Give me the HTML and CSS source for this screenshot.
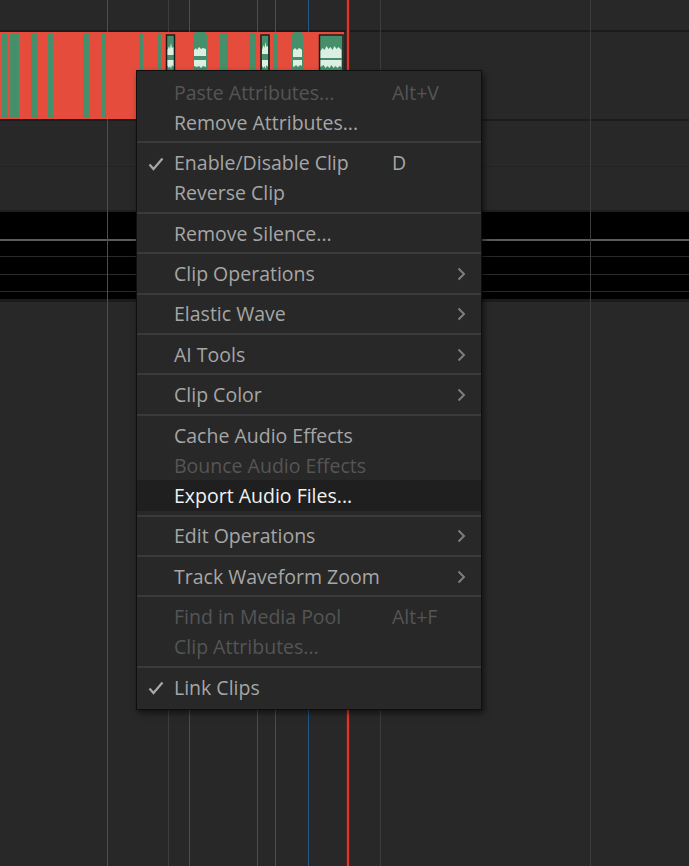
FILE: index.html
```html
<!DOCTYPE html>
<html lang="en">
<head>
    <meta charset="UTF-8">
    <title>Timeline clip menu</title>
    <link rel="stylesheet" href="styles.css">
</head>
<body>
    <div class="timeline">
        <div class="row row-top"></div>
        <div class="row row-clip">
            <svg class="clip" width="349" height="87" viewBox="0 0 349 87">
                <rect x="0" y="0" width="344" height="87" fill="#e54c3c"/>
                <g fill="#45906a">
                    <rect x="2" y="1" width="5" height="85"/>
                    <rect x="10" y="1" width="9" height="85"/>
                    <rect x="31" y="1" width="6" height="85"/>
                    <rect x="48" y="1" width="5" height="85"/>
                    <rect x="83" y="1" width="6" height="85"/>
                    <rect x="102" y="1" width="4" height="85"/>
                    <rect x="139" y="1" width="4" height="85"/>
                    <rect x="157" y="1" width="4" height="85"/>
                    <rect x="220" y="1" width="8" height="85"/>
                    <rect x="249" y="1" width="7" height="85"/>
                    <rect x="273" y="1" width="5" height="85"/>
                    <path d="M193 86V4q0-4 4-4h6q4 0 4 4v82z"/>
                    <path d="M292 86V4q0-4 4-4h3q4 0 4 4v82z"/>
                </g>
                <g fill="#45906a" stroke="#1d1d1d" stroke-width="1.5">
                    <rect x="166.5" y="3" width="8" height="83"/>
                    <rect x="261" y="3" width="8" height="83"/>
                    <rect x="319.5" y="3" width="23.5" height="83"/>
                </g>
                <g fill="#dcefe2">
                    <path d="M167.5 18l1.5-4 1 3 1-6 1 5 1.5-1v8h-6z"/>
                    <path d="M167.5 28h6v7l-1.5-2-1 4-1-3-1 2-1.5-2z"/>
                    <path d="M194 18l2-2 1 2 2-3 2 2 2-1 3 1v7h-12z"/>
                    <path d="M194 28h12v7l-3-1-2 2-2-2-2 1-3-1z"/>
                    <path d="M262 18l1.5-5 1 3 1-6 1 5 1.5-1v8h-6z"/>
                    <path d="M262 28h6v7l-1.5-2-1 4-1-3-1 2-1.5-2z"/>
                    <path d="M293 18l2-2 2 2 2-2 2 1 1 1v7h-9z"/>
                    <path d="M293 28h9v6l-2-1-2 2-2-2-2 2-1-1z"/>
                    <path d="M320.5 19l2-3 2 2 2-4 2 3 2-2 2 3 2-4 2 3 2-2 2 2 1 1v8h-21z"/>
                    <path d="M320.5 28h21v7l-2-1-2 2-2-2-2 2-2-3-2 3-2-2-2 2-2-3-3 2z"/>
                </g>
            </svg>
        </div>
        <div class="row row-a"></div>
        <div class="row row-b"></div>
        <div class="band">
            <div class="band-line bright"></div>
            <div class="band-line one"></div>
            <div class="band-line two"></div>
            <div class="band-line three"></div>
        </div>
        <div class="row row-rest"></div>

        <div class="vline blue" style="left:107px"></div>
        <div class="vline grey" style="left:168px"></div>
        <div class="vline blue" style="left:189px"></div>
        <div class="vline blue" style="left:257px"></div>
        <div class="vline blue" style="left:275px"></div>
        <div class="vline blue" style="left:308px"></div>
        <div class="vline grey" style="left:380px"></div>
        <div class="vline grey" style="left:590px"></div>
        <div class="playhead"></div>

        <div class="menu">
            <div class="item disabled"><span class="check"></span><span class="label">Paste Attributes...</span><span class="key">Alt+V</span><span class="arrow"></span></div>
            <div class="item"><span class="check"></span><span class="label">Remove Attributes...</span><span class="key"></span><span class="arrow"></span></div>
            <div class="sep"></div>
            <div class="item"><span class="check"><svg width="16" height="14" viewBox="0 0 16 14"><polyline points="1.5,7.5 5.5,12 14.5,1.5" fill="none" stroke="#a8a8a8" stroke-width="2.2"/></svg></span><span class="label">Enable/Disable Clip</span><span class="key">D</span><span class="arrow"></span></div>
            <div class="item"><span class="check"></span><span class="label">Reverse Clip</span><span class="key"></span><span class="arrow"></span></div>
            <div class="sep"></div>
            <div class="item"><span class="check"></span><span class="label">Remove Silence...</span><span class="key"></span><span class="arrow"></span></div>
            <div class="sep"></div>
            <div class="item"><span class="check"></span><span class="label">Clip Operations</span><span class="key"></span><span class="arrow"><svg width="9" height="14" viewBox="0 0 9 14"><polyline points="1.5,1.5 7,7 1.5,12.5" fill="none" stroke="#7e7e7e" stroke-width="2"/></svg></span></div>
            <div class="sep"></div>
            <div class="item"><span class="check"></span><span class="label">Elastic Wave</span><span class="key"></span><span class="arrow"><svg width="9" height="14" viewBox="0 0 9 14"><polyline points="1.5,1.5 7,7 1.5,12.5" fill="none" stroke="#7e7e7e" stroke-width="2"/></svg></span></div>
            <div class="sep"></div>
            <div class="item"><span class="check"></span><span class="label">AI Tools</span><span class="key"></span><span class="arrow"><svg width="9" height="14" viewBox="0 0 9 14"><polyline points="1.5,1.5 7,7 1.5,12.5" fill="none" stroke="#7e7e7e" stroke-width="2"/></svg></span></div>
            <div class="sep"></div>
            <div class="item"><span class="check"></span><span class="label">Clip Color</span><span class="key"></span><span class="arrow"><svg width="9" height="14" viewBox="0 0 9 14"><polyline points="1.5,1.5 7,7 1.5,12.5" fill="none" stroke="#7e7e7e" stroke-width="2"/></svg></span></div>
            <div class="sep"></div>
            <div class="item"><span class="check"></span><span class="label">Cache Audio Effects</span><span class="key"></span><span class="arrow"></span></div>
            <div class="item disabled"><span class="check"></span><span class="label">Bounce Audio Effects</span><span class="key"></span><span class="arrow"></span></div>
            <div class="item active"><span class="check"></span><span class="label">Export Audio Files...</span><span class="key"></span><span class="arrow"></span></div>
            <div class="sep"></div>
            <div class="item"><span class="check"></span><span class="label">Edit Operations</span><span class="key"></span><span class="arrow"><svg width="9" height="14" viewBox="0 0 9 14"><polyline points="1.5,1.5 7,7 1.5,12.5" fill="none" stroke="#7e7e7e" stroke-width="2"/></svg></span></div>
            <div class="sep"></div>
            <div class="item"><span class="check"></span><span class="label">Track Waveform Zoom</span><span class="key"></span><span class="arrow"><svg width="9" height="14" viewBox="0 0 9 14"><polyline points="1.5,1.5 7,7 1.5,12.5" fill="none" stroke="#7e7e7e" stroke-width="2"/></svg></span></div>
            <div class="sep"></div>
            <div class="item disabled"><span class="check"></span><span class="label">Find in Media Pool</span><span class="key">Alt+F</span><span class="arrow"></span></div>
            <div class="item disabled"><span class="check"></span><span class="label">Clip Attributes...</span><span class="key"></span><span class="arrow"></span></div>
            <div class="sep"></div>
            <div class="item"><span class="check"><svg width="16" height="14" viewBox="0 0 16 14"><polyline points="1.5,7.5 5.5,12 14.5,1.5" fill="none" stroke="#a8a8a8" stroke-width="2.2"/></svg></span><span class="label">Link Clips</span><span class="key"></span><span class="arrow"></span></div>
        </div>
    </div>
</body>
</html>
```

FILE: styles.css
```css
* {
    margin: 0;
    padding: 0;
    box-sizing: border-box;
}

body {
    background: #282828;
    font-family: 'Open Sans', 'Noto Sans', sans-serif;
    overflow: hidden;
}

.timeline {
    position: relative;
    width: 689px;
    height: 866px;
    background: #282828;
}

.row {
    position: relative;
}

.row-top {
    height: 32px;
    border-bottom: 2px solid #1b1b1b;
}

.row-clip {
    height: 89px;
    border-bottom: 2px solid #1c1c1c;
}

.clip {
    position: relative;
    z-index: 3;
    display: block;
}

.row-a {
    height: 46px;
    border-bottom: 1px solid #222;
}

.row-b {
    height: 45px;
    border-bottom: 2px solid #1e1e1e;
}

.band {
    height: 90px;
    background: #000;
    border-bottom: 3px solid #1c1c1c;
    display: flex;
    flex-direction: column;
    padding-top: 27px;
}

.band-line {
    flex-shrink: 0;
    height: 1px;
    background: #2a2a2a;
}

.band-line.bright {
    height: 2px;
    background: #5a5a5a;
}

.band-line.one {
    margin-top: 15px;
}

.band-line.two {
    margin-top: 17px;
}

.band-line.three {
    margin-top: 16px;
}

.row-rest {
    height: 564px;
}

.vline {
    position: absolute;
    top: 0;
    bottom: 0;
    width: 1px;
    z-index: 1;
}

.vline.blue {
    background: #215789;
}

.vline.grey {
    background: #3c3c3c;
}

.playhead {
    position: absolute;
    top: 0;
    bottom: 0;
    left: 346px;
    width: 4px;
    background: #d63b2d;
    border-left: 1px solid #5a1f1a;
    border-right: 1px solid #5a1f1a;
    z-index: 4;
}

.menu {
    position: absolute;
    left: 136px;
    top: 70px;
    width: 346px;
    background: #282828;
    border: 1px solid #0f0f0f;
    box-shadow: 2px 3px 6px rgba(0, 0, 0, 0.55);
    padding: 6px 0 7px;
    z-index: 10;
}

.item {
    height: 30.2px;
    display: grid;
    grid-template-columns: 37px 218px 1fr 24px;
    align-items: center;
    font-size: 19.5px;
    color: #a6a6a6;
    white-space: nowrap;
}

.item.disabled {
    color: #555;
}

.item.active {
    background: #1f1f1f;
    color: #f2f2f2;
}

.check {
    display: flex;
    justify-content: flex-end;
    padding-right: 10px;
    padding-top: 2px;
}

.arrow {
    display: flex;
    align-items: center;
    padding-top: 1px;
}

.sep {
    height: 2px;
    background: #3a3a3a;
    margin: 4px 0 4.2px;
}
```
